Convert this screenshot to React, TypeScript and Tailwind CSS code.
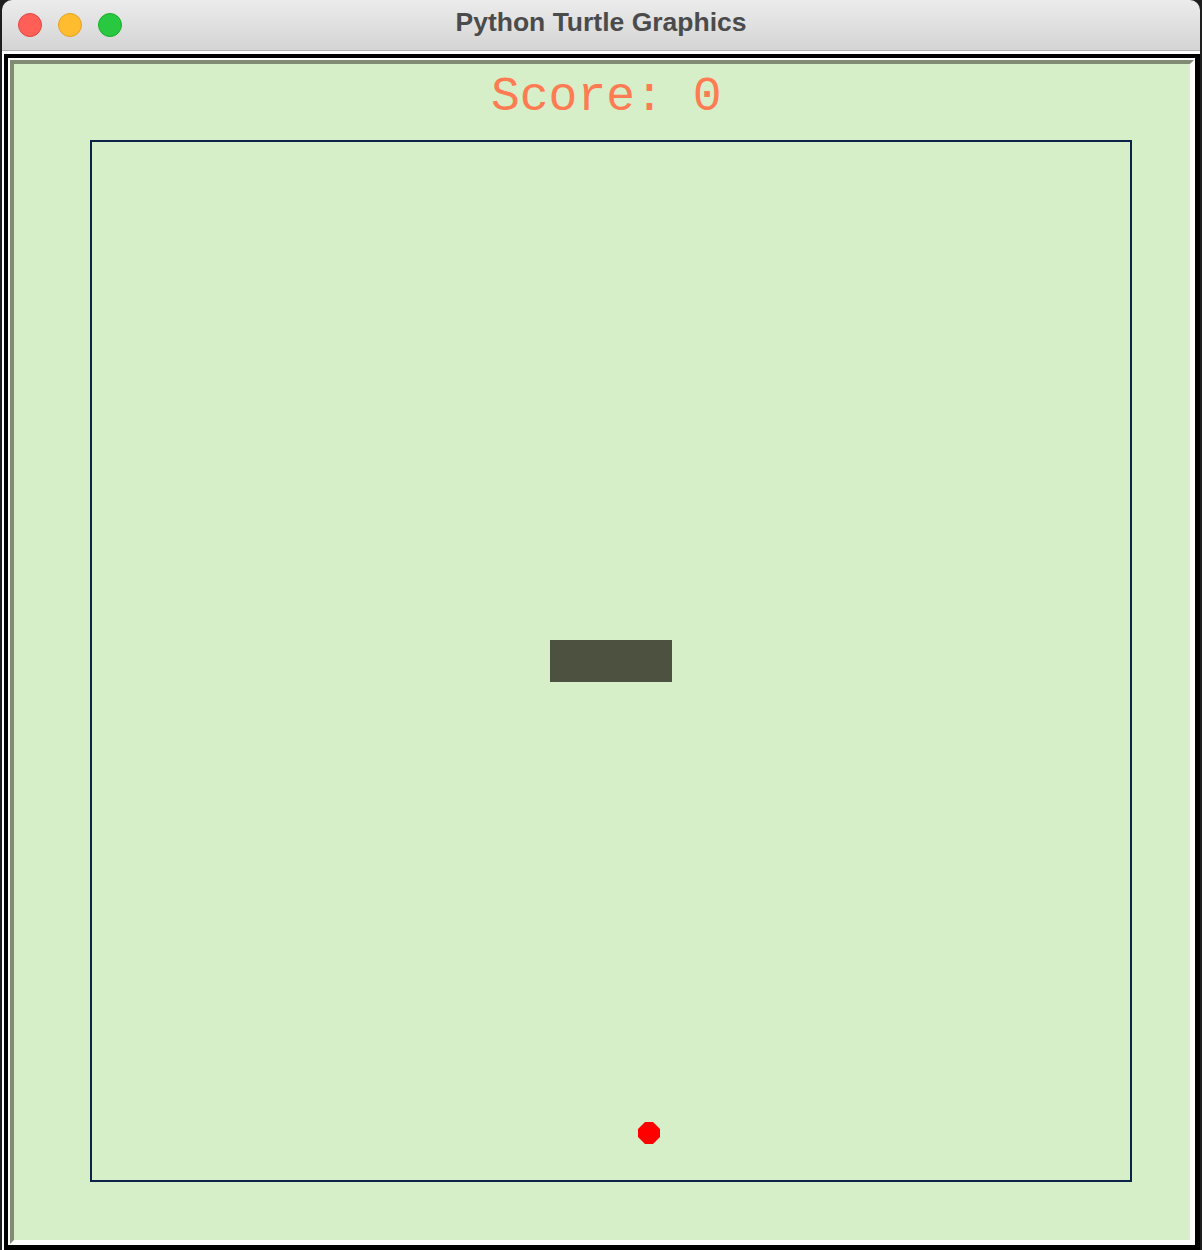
export default function App() {
  return (
    <div className="w-[1202px] h-[1250px] bg-[#1e1e1e] overflow-hidden">
      <div className="ml-[2px] w-[1198px] h-[1250px] flex flex-col">
        {/* title bar */}
        <div className="relative h-[51px] shrink-0 rounded-t-[10px] bg-gradient-to-b from-[#ececec] to-[#d4d4d4] border-b border-[#b2b2b2] flex items-center">
          <div className="flex items-center gap-[16px] pl-[16px]">
            <span className="block w-[24px] h-[24px] rounded-full bg-[#ff5f57] border border-[#e2463f]" />
            <span className="block w-[24px] h-[24px] rounded-full bg-[#febc2e] border border-[#e1a325]" />
            <span className="block w-[24px] h-[24px] rounded-full bg-[#28c840] border border-[#1dad2b]" />
          </div>
          <div className="absolute inset-0 flex items-center justify-center pb-[4px] text-[26.5px] font-bold text-[#4b4b4b] font-['Liberation_Sans',Arial,sans-serif]">
            Python Turtle Graphics
          </div>
        </div>

        {/* window body */}
        <div className="flex-1 bg-white pt-[3px] pl-[2px] flex flex-col">
          <div className="flex-1 bg-black pt-[4px] pl-[4px] pr-[5px] pb-[5px] flex flex-col">
            <div className="flex-1 bg-white pt-[2px] pl-[2px] pr-[1px] pb-[1px] flex flex-col">
              <div className="flex-1 border-[4px] border-t-[#7f8c73] border-l-[#7f8c73] border-r-white border-b-white">
                <div className="relative w-full h-full bg-[#d7efc9]">
                  <div className="absolute left-[477px] top-[9px] h-[48px] leading-[48px] whitespace-pre text-[48px] text-[#ff7b52] font-['Liberation_Mono','Courier_New',monospace]">
                    Score: 0
                  </div>
                  <div className="absolute left-[76px] top-[76px] w-[1042px] h-[1042px] border-2 border-[#0b2447]" />
                  <div className="absolute left-[536px] top-[576px] w-[122px] h-[42px] bg-[#4c5140]" />
                  <svg
                    className="absolute left-[624px] top-[1058px]"
                    width="22"
                    height="22"
                    viewBox="0 0 22 22"
                  >
                    <polygon
                      points="7,0 15,0 22,7 22,15 15,22 7,22 0,15 0,7"
                      fill="#ff0000"
                    />
                  </svg>
                </div>
              </div>
            </div>
          </div>
        </div>
      </div>
    </div>
  );
}
